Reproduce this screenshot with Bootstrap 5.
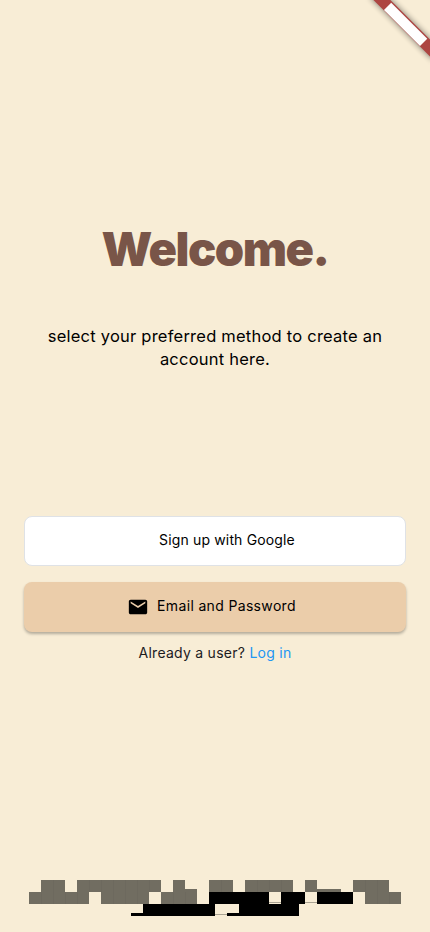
<!DOCTYPE html>
<html lang="en">
<head>
<meta charset="utf-8">
<meta name="viewport" content="width=device-width, initial-scale=1">
<title>Welcome</title>
<link href="https://cdn.jsdelivr.net/npm/bootstrap@5.3.0/dist/css/bootstrap.min.css" rel="stylesheet">
<style>
body{background:#f8edd6;font-family:Inter,"Liberation Sans",sans-serif;color:#000}
.screen{height:932px;padding:0 24px;overflow:hidden}
.headline{margin:220px 0 0;font-size:47px;line-height:58px;font-weight:900;letter-spacing:-1.5px;color:#795548}
.intro{margin:47px 0 0;font-size:16.5px;line-height:23px;letter-spacing:.23px}
.choices{margin-top:145px;gap:16px}
.choice{height:50px;border-radius:8px;font-size:14px;line-height:20px;padding:0 0 3px;color:#000}
.choice-google{background:#fff;border:1px solid #dfe2e6;padding-left:24px;letter-spacing:.15px}
.choice-email{background:#ebcdaa;border:0;box-shadow:0 2px 3px rgba(0,0,0,.28);padding-right:7px;letter-spacing:.34px}
.choice-email svg{margin-top:3px}
.signin{margin-top:11px;font-size:14px;line-height:20px;letter-spacing:.26px;color:#1c1b1f}
.signin a{color:#2196f3}
.ribbon{z-index:2}
</style>
<script src="https://cdn.jsdelivr.net/npm/bootstrap@5.3.0/dist/js/bootstrap.bundle.min.js"></script>
</head>
<body>
<svg class="ribbon position-absolute top-0 end-0" width="70" height="70" aria-hidden="true">
  <defs><filter id="soft" x="-20%" y="-100%" width="140%" height="300%"><feGaussianBlur stdDeviation="3"/></filter></defs>
  <g transform="translate(70 0) rotate(45)">
    <rect x="-44" y="28" width="88" height="12" fill="#000" opacity=".5" filter="url(#soft)"/>
    <rect x="-44" y="28" width="88" height="12" fill="#ad4541"/>
    <rect x="-25.5" y="29.4" width="51" height="10.2" fill="#fff"/>
  </g>
</svg>
<main class="screen d-flex flex-column text-center">
  <h1 class="headline">Welcome.</h1>
  <p class="intro">select your preferred method to create an<br>account here.</p>
  <div class="choices d-flex flex-column">
    <button class="btn choice choice-google d-flex align-items-center justify-content-center" type="button">Sign up with Google</button>
    <button class="btn choice choice-email d-flex align-items-center justify-content-center" type="button">
      <svg class="me-2" width="22" height="22" viewBox="0 0 24 24" aria-hidden="true"><path d="M20 4H4c-1.1 0-2 .9-2 2v12c0 1.1.9 2 2 2h16c1.1 0 2-.9 2-2V6c0-1.1-.9-2-2-2zm0 4-8 5-8-5V6l8 5 8-5v2z"/></svg>
      Email and Password</button>
  </div>
  <p class="signin mb-0">Already a user? <a href="#" class="text-decoration-none">Log in</a></p>
  <footer class="mt-auto d-flex justify-content-center pb-3">
    <svg width="372" height="37" viewBox="29 879 372 37" shape-rendering="crispEdges" aria-hidden="true">
      <path fill="#716d61" d="M41 880h24v12H41zM77 880h84v12H77zM173 880h12v9h12v3h-24zM209 880h24v12h-24zM245 880h48v12h-48zM305 880h12v9h24v3h-36zM353 880h36v12h-36zM29 892h60v12H29zM101 892h48v12h-48zM161 892h36v12h-36zM365 892h36v12h-36z"/>
      <path stroke="#69665b" d="M53.5 880v12M89.500 880v12M101.500 880v12M113.500 880v12M125.500 880v12M137.500 880v12M149.500 880v12M221.500 880v12M257.500 880v12M269.500 880v12M281.500 880v12M365.500 880v12M377.500 880v12M41.500 892v12M53.500 892v12M65.500 892v12M77.500 892v12M113.500 892v12M125.500 892v12M137.500 892v12M173.500 892v12M185.500 892v12M377.500 892v12M389.500 892v12" stroke-opacity=".5"/>
      <path fill="#000" d="M209 892h60v12h-60zM281 892h24v12h-24zM317 892h36v12h-36zM143 904h72v12h-84v-3h12zM239 904h60v12h-72v-3h12z"/>
      <path stroke="#aaa393" d="M269 902.500h12M305 902.500h12M215 914.500h12"/>
    </svg>
  </footer>
</main>
</body>
</html>
